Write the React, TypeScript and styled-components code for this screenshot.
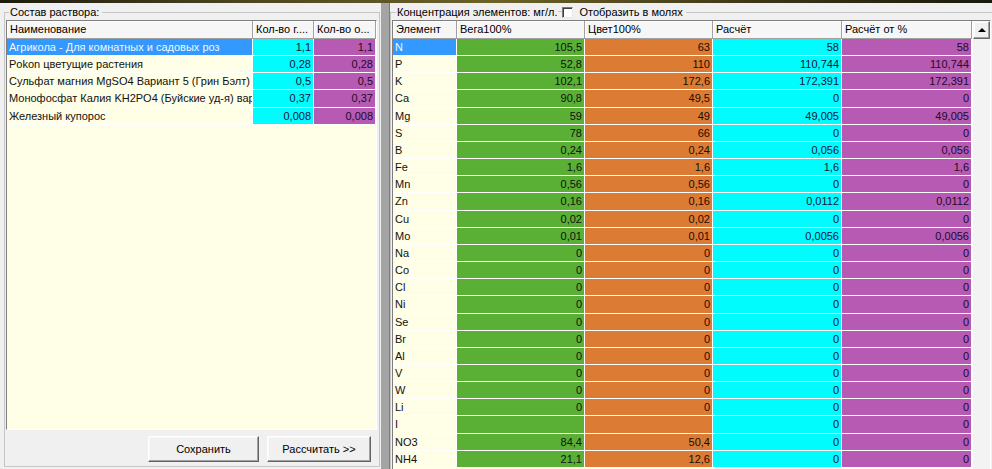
import React from "react";
import styled, { createGlobalStyle } from "styled-components";

type Tone = "cream" | "selected" | "green" | "orange" | "cyan" | "purple";

const TONES: Record<Tone, { bg: string; fg: string }> = {
  cream: { bg: "#fffee6", fg: "#111" },
  selected: { bg: "#3399ff", fg: "#eef7ff" },
  green: { bg: "#5ab034", fg: "#111" },
  orange: { bg: "#dc7b34", fg: "#1a0d04" },
  cyan: { bg: "#00fcfc", fg: "#14143a" },
  purple: { bg: "#b65ab4", fg: "#1e0a24" },
};

// строки немного "тянутся" — подогнано под скриншот
const ROW_H = 17.17;

const GlobalStyle = createGlobalStyle`
  html, body {
    margin: 0;
    padding: 0;
    background: #f0f0f0;
  }
  body {
    font-family: "Liberation Sans", Arial, sans-serif;
    font-size: 11px;
    color: #000;
  }
`;

const Window = styled.div`
  width: 992px;
  height: 469px;
  overflow: hidden;
  display: flex;
  flex-direction: column;
  background: #f0f0f0;
`;

const TopEdge = styled.div`
  flex: none;
  height: 3px;
  background: linear-gradient(to right, #1c1c0e, #4c4620 25%, #6c6228 50%, #3e3818 75%, #1a1a0c);
`;

const Body = styled.div`
  flex: 1;
  display: flex;
  min-height: 0;
`;

const LeftPane = styled.div`
  flex: none;
  width: 381px;
  box-sizing: border-box;
  padding: 3px 1px 2px 4px;
  display: flex;
`;

const Splitter = styled.div`
  flex: none;
  width: 8px;
  background: #a4a4a4;
  border-right: 1px solid #7c7c7c;
`;

const RightPane = styled.div`
  flex: 1;
  min-width: 0;
  padding-top: 3px;
  display: flex;
  flex-direction: column;
  overflow: hidden;
`;

const Group = styled.fieldset<{ $open?: boolean }>`
  flex: 1;
  min-width: 0;
  margin: 0 ${p => (p.$open ? "-2px" : "0")} ${p => (p.$open ? "-24px" : "0")} 0;
  padding: 2px 2px 0 1px;
  border: 1px solid #c6c6c6;
  display: flex;
  flex-direction: column;
`;

const Legend = styled.legend<{ $indent: number }>`
  margin-left: ${p => p.$indent}px;
  padding: 0 3px 0 1px;
  height: 12px;
  line-height: 12px;
  font-size: 11px;
  display: flex;
  align-items: center;
  white-space: nowrap;
`;

const LegendDash = styled.span`
  width: 4px;
  height: 1px;
  margin: 0 0 1px 1px;
  background: #c6c6c6;
`;

const CheckBox = styled.span`
  box-sizing: border-box;
  width: 11px;
  height: 11px;
  margin: 0 6px 0 0;
  background: #fff;
  border: 1px solid;
  border-color: #7a7a7a #e8e8e8 #e8e8e8 #7a7a7a;
  box-shadow: inset 1px 1px 0 #404040;
`;

const Table = styled.div`
  flex: 1;
  min-height: 0;
  display: flex;
  background: #fffee6;
  border: 1px solid;
  border-color: #7e7e7e #ffffff #ffffff #7e7e7e;
  overflow: hidden;
`;

const TableBody = styled.div`
  flex: 1;
  min-width: 0;
  display: flex;
  flex-direction: column;
`;

const HeadRow = styled.div`
  flex: none;
  display: flex;
  height: 18px;
`;

const HeadCell = styled.div<{ $w: number }>`
  flex: none;
  box-sizing: border-box;
  width: ${p => p.$w}px;
  height: 100%;
  padding: 0 3px;
  line-height: 17px;
  background: #f6f6f6;
  border-right: 1px solid #a0a0a0;
  border-bottom: 1px solid #a0a0a0;
  box-shadow: inset 1px 1px 0 #ffffff;
  white-space: nowrap;
  overflow: hidden;
`;

const Row = styled.div`
  flex: none;
  display: flex;
  height: ${ROW_H}px;
`;

const Cell = styled.div<{ $w: number; $tone: Tone; $num?: boolean }>`
  flex: none;
  box-sizing: border-box;
  width: ${p => p.$w}px;
  height: 100%;
  padding: 0 2px;
  line-height: ${ROW_H - 1}px;
  text-align: ${p => (p.$num ? "right" : "left")};
  background: ${p => TONES[p.$tone].bg};
  color: ${p => TONES[p.$tone].fg};
  border-right: 1px solid #ffffff;
  border-bottom: 1px solid #ffffff;
  white-space: nowrap;
  overflow: hidden;
`;

const ScrollBar = styled.div`
  flex: none;
  width: 17px;
  display: flex;
  flex-direction: column;
  background: #f3f3f3;
  border-left: 1px solid #ffffff;
`;

const ScrollButton = styled.div`
  flex: none;
  box-sizing: border-box;
  height: 18px;
  display: flex;
  align-items: center;
  justify-content: center;
  background: #f0f0f0;
  border: 1px solid;
  border-color: #f8f8f8 #6a6a6a #6a6a6a #f8f8f8;
  box-shadow: inset -1px -1px 0 #a0a0a0, inset 1px 1px 0 #ffffff;
`;

const ArrowUp = styled.span`
  width: 0;
  height: 0;
  border-left: 4px solid transparent;
  border-right: 4px solid transparent;
  border-bottom: 4px solid #000;
  margin-top: -1px;
`;

const ButtonRow = styled.div`
  flex: none;
  display: flex;
  justify-content: flex-end;
  gap: 8px;
  padding: 6px 6px 4px 0;
`;

const Button = styled.button<{ $w: number }>`
  width: ${p => p.$w}px;
  height: 26px;
  padding: 0;
  font-family: "Liberation Sans", Arial, sans-serif;
  font-size: 11px;
  color: #000;
  background: #f0f0f0;
  border: 1px solid;
  border-color: #ffffff #646464 #646464 #ffffff;
  box-shadow: inset -1px -1px 0 #a0a0a0, inset 1px 1px 0 #f8f8f8;
`;

const MIX_COLS = [246, 61, 62];

const mixes = [
  { name: "Агрикола - Для комнатных и садовых роз", g: "1,1", o: "1,1", sel: true },
  { name: "Pokon цветущие растения", g: "0,28", o: "0,28" },
  { name: "Сульфат магния MgSO4 Вариант 5 (Грин Бэлт)", g: "0,5", o: "0,5" },
  { name: "Монофосфат Калия KH2PO4 (Буйские уд-я) вариант", g: "0,37", o: "0,37" },
  { name: "Железный купорос", g: "0,008", o: "0,008" },
];

const EL_COLS = [64, 128, 128, 129, 130];
const EL_HEAD = ["Элемент", "Вега100%", "Цвет100%", "Расчёт", "Расчёт от %"];
const EL_TONES: Tone[] = ["cream", "green", "orange", "cyan", "purple"];

const zeros = ["Na", "Co", "Cl", "Ni", "Se", "Br", "Al", "V", "W", "Li"].map(e => [e, "0", "0", "0", "0"]);

const elements: string[][] = [
  ["N", "105,5", "63", "58", "58"],
  ["P", "52,8", "110", "110,744", "110,744"],
  ["K", "102,1", "172,6", "172,391", "172,391"],
  ["Ca", "90,8", "49,5", "0", "0"],
  ["Mg", "59", "49", "49,005", "49,005"],
  ["S", "78", "66", "0", "0"],
  ["B", "0,24", "0,24", "0,056", "0,056"],
  ["Fe", "1,6", "1,6", "1,6", "1,6"],
  ["Mn", "0,56", "0,56", "0", "0"],
  ["Zn", "0,16", "0,16", "0,0112", "0,0112"],
  ["Cu", "0,02", "0,02", "0", "0"],
  ["Mo", "0,01", "0,01", "0,0056", "0,0056"],
  ...zeros,
  ["I", "", "", "0", "0"],
  ["NO3", "84,4", "50,4", "0", "0"],
  ["NH4", "21,1", "12,6", "0", "0"],
];

export default function App() {
  return (
    <Window>
      <GlobalStyle />
      <TopEdge />
      <Body>
        <LeftPane>
          <Group>
            <Legend $indent={3}>Состав раствора:</Legend>
            <Table>
              <TableBody>
                <HeadRow>
                  <HeadCell $w={MIX_COLS[0]}>Наименование</HeadCell>
                  <HeadCell $w={MIX_COLS[1]}>Кол-во г....</HeadCell>
                  <HeadCell $w={MIX_COLS[2]}>Кол-во о...</HeadCell>
                </HeadRow>
                {mixes.map(m => (
                  <Row key={m.name}>
                    <Cell $w={MIX_COLS[0]} $tone={m.sel ? "selected" : "cream"}>{m.name}</Cell>
                    <Cell $w={MIX_COLS[1]} $tone="cyan" $num>{m.g}</Cell>
                    <Cell $w={MIX_COLS[2]} $tone="purple" $num>{m.o}</Cell>
                  </Row>
                ))}
              </TableBody>
            </Table>
            <ButtonRow>
              <Button $w={111}>Сохранить</Button>
              <Button $w={104}>Рассчитать &gt;&gt;</Button>
            </ButtonRow>
          </Group>
        </LeftPane>
        <Splitter />
        <RightPane>
          <Group $open>
            <Legend $indent={4}>
              Концентрация элементов: мг/л.
              <LegendDash />
              <CheckBox />
              Отобразить в молях
            </Legend>
            <Table>
              <TableBody>
                <HeadRow>
                  {EL_HEAD.map((h, i) => (
                    <HeadCell key={h} $w={EL_COLS[i]}>{h}</HeadCell>
                  ))}
                </HeadRow>
                {elements.map((r, ri) => (
                  <Row key={r[0]}>
                    {r.map((v, i) => (
                      <Cell
                        key={i}
                        $w={EL_COLS[i]}
                        $tone={i === 0 && ri === 0 ? "selected" : EL_TONES[i]}
                        $num={i > 0}
                      >
                        {v}
                      </Cell>
                    ))}
                  </Row>
                ))}
              </TableBody>
              <ScrollBar>
                <ScrollButton>
                  <ArrowUp />
                </ScrollButton>
              </ScrollBar>
            </Table>
          </Group>
        </RightPane>
      </Body>
    </Window>
  );
}
